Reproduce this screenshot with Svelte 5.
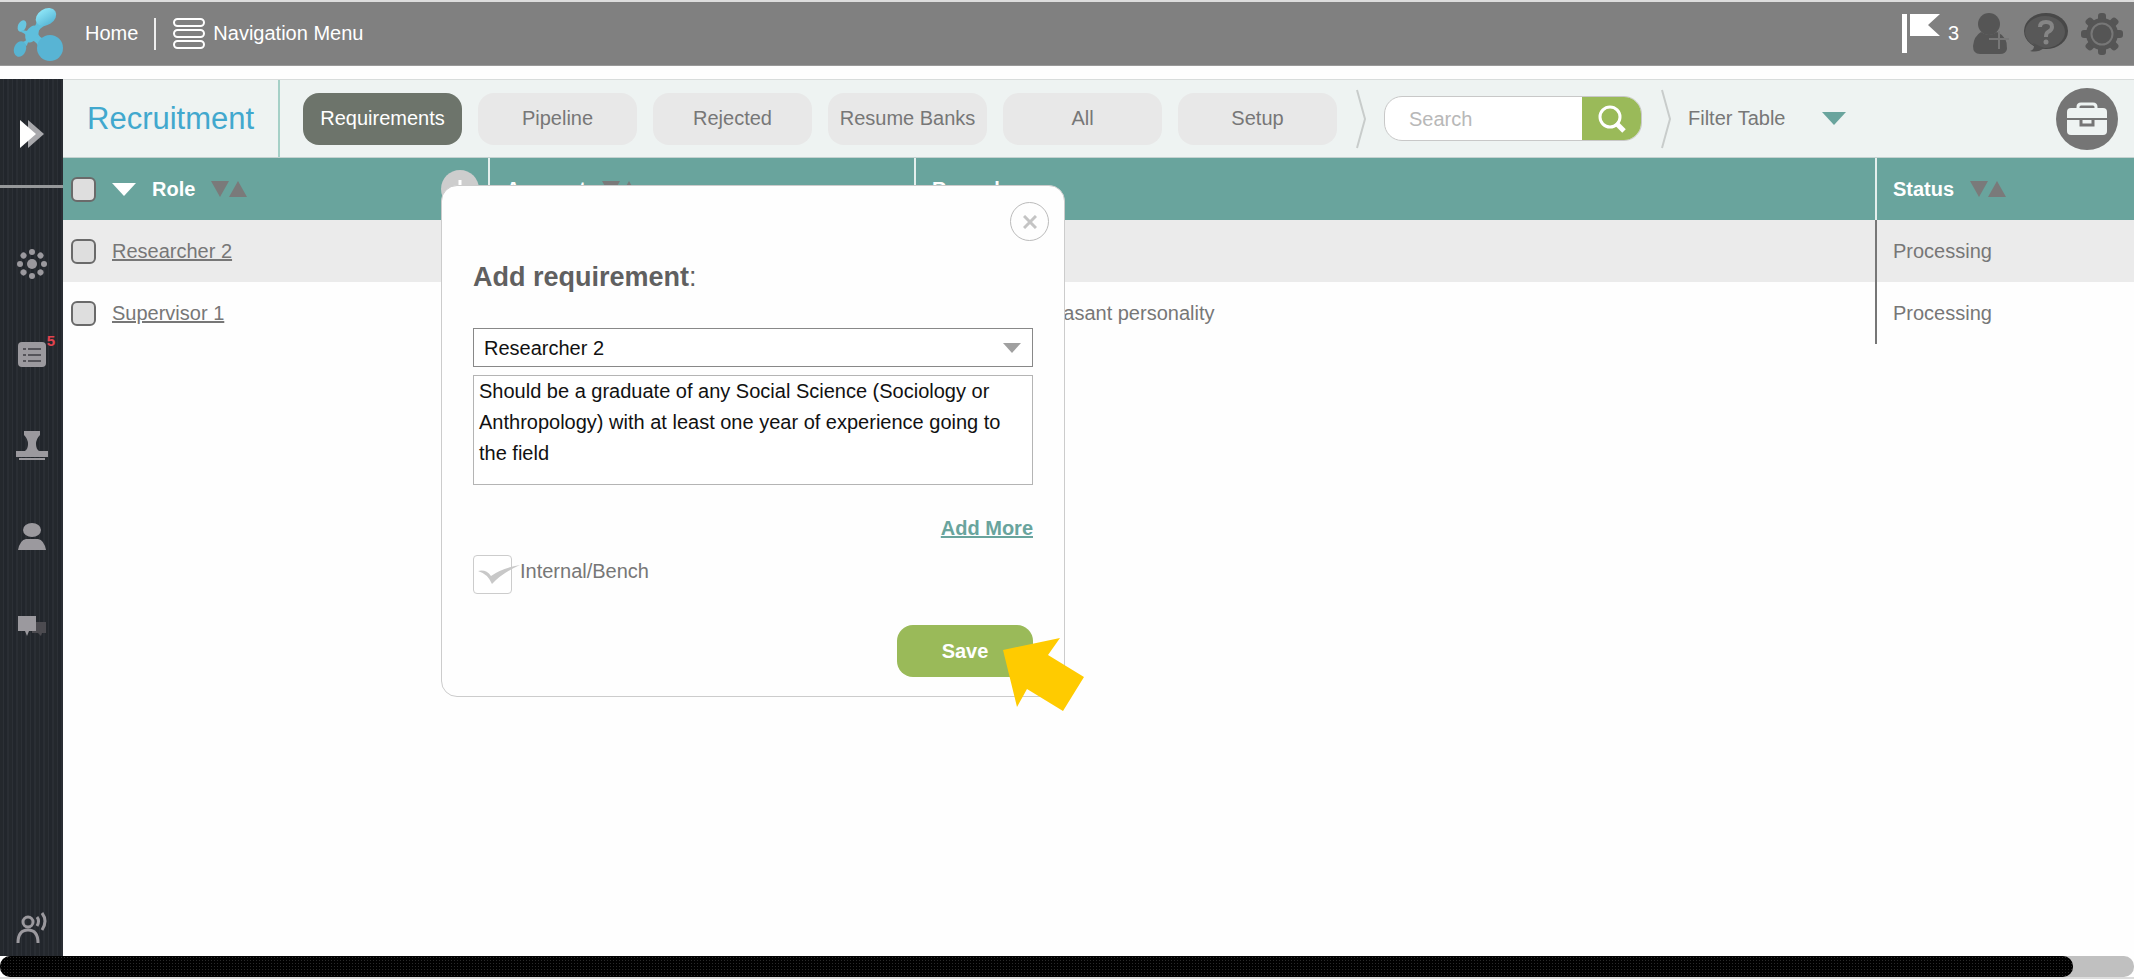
<script>
  const tabs = ['Requirements', 'Pipeline', 'Rejected', 'Resume Banks', 'All', 'Setup'];
  const rows = [
    { role: 'Researcher 2', account: '', remarks: '', status: 'Processing' },
    { role: 'Supervisor 1', account: '', remarks: 'With a very pleasant personality', status: 'Processing' },
  ];
  const dots = [0, 45, 90, 135, 180, 225, 270, 315];

  let active = 'Requirements';
  let search = '';
  let open = true;
  let internal = true;
  let role = 'Researcher 2';
  let text = 'Should be a graduate of any Social Science (Sociology or Anthropology) with at least one year of experience going to the field';
</script>

<div class="page">
  <header class="topbar">
    <a href="#home" class="logo" aria-label="Logo">
      <svg width="54" height="58" viewBox="0 0 54 58">
        <defs>
          <linearGradient id="drop" x1="0" y1="0" x2="0" y2="1">
            <stop offset="0" stop-color="#8ce4f6" />
            <stop offset="1" stop-color="#5ab9d8" />
          </linearGradient>
        </defs>
        <path d="M24 25 Q30 21 30 14 L39 20 Q32 23 31 28 Q32 33 38 34 L32 44 Q31 37 24 35Z" fill="#5fbfdc" />
        <ellipse cx="39" cy="12" rx="11" ry="8" transform="rotate(-32 39 12)" fill="url(#drop)" />
        <ellipse cx="15" cy="21" rx="4" ry="6" transform="rotate(25 15 21)" fill="#68c6e0" />
        <path d="M15 25 Q19 26 22 26 L20 32 Q18 28 14 27Z" fill="#5fbfdc" />
        <ellipse cx="25" cy="29" rx="6" ry="9" transform="rotate(28 25 29)" fill="#5fbfdc" />
        <path d="M24 35 Q20 37 20 41 L15 37 Q20 36 20 33Z" fill="#5fbfdc" />
        <ellipse cx="13" cy="44" rx="6" ry="8" transform="rotate(20 13 44)" fill="#58b4d2" />
        <circle cx="43" cy="43" r="13" fill="#58b4d4" />
      </svg>
    </a>
    <a href="#home">Home</a>
    <span class="bar"></span>
    <a href="#menu" class="menu">
      <svg width="34" height="34" viewBox="0 0 34 34" fill="none" stroke="#fff" stroke-width="2">
        <rect x="2" y="2" width="30" height="7" rx="3.5" />
        <rect x="2" y="13" width="30" height="7" rx="3.5" />
        <rect x="2" y="24" width="30" height="7" rx="3.5" />
      </svg>
      Navigation Menu
    </a>
    <div class="tools">
      <a href="#flags" class="flag">
        <svg width="40" height="40" viewBox="0 0 40 40" fill="#fff">
          <path d="M1 0H6V39H1Z M9 0H39L27 11L39 22H9Z" />
        </svg>
        3
      </a>
      <a href="#users" aria-label="Add user">
        <svg width="38" height="42" viewBox="0 0 38 42">
          <circle cx="16" cy="11" r="11" fill="#555" />
          <path d="M8 19 Q16 25 24 19 Q35 24 34 36 Q33 41 27 41 H7 Q0 41 0 33 Q1 23 8 19Z" fill="#555" />
          <path d="M16 26H36M26 18V36" stroke="#777" stroke-width="2" />
        </svg>
      </a>
      <a href="#help" aria-label="Help">
        <svg width="46" height="42" viewBox="0 0 46 42">
          <ellipse cx="23" cy="18" rx="22" ry="18" fill="#484848" />
          <ellipse cx="22" cy="19" rx="20" ry="16" fill="#585858" />
          <path d="M10 30 Q13 36 7 38 Q15 40 21 35Z" fill="#505050" />
          <path d="M17 14 Q17 9 23 9 Q29 9 29 14 Q29 17 25 19 Q23 20 23 24" fill="none" stroke="#858585" stroke-width="4" />
          <circle cx="23" cy="29" r="2.5" fill="#858585" />
        </svg>
      </a>
      <a href="#settings" aria-label="Settings">
        <svg width="42" height="42" viewBox="0 0 42 42">
          {#each dots as deg}
            <rect x="17" y="0" width="8" height="12" rx="3" fill="#555" transform="rotate({deg} 21 21)" />
          {/each}
          <circle cx="21" cy="21" r="16" fill="#555" />
          <circle cx="21" cy="21" r="10.5" fill="none" stroke="#777" stroke-width="2" />
        </svg>
      </a>
    </div>
  </header>

  <div class="body">
    <nav class="side">
      <a href="#expand" class="expand" aria-label="Expand">
        <svg width="26" height="30" viewBox="0 0 26 30">
          <path d="M9 1L25 15L9 29Z" fill="#a8a8ac" />
          <path d="M1 1L17 15L1 29Z" fill="#fff" />
        </svg>
      </a>
      <a href="#network" aria-label="Network">
        <svg width="32" height="32" viewBox="0 0 32 32" fill="#9b999e">
          <circle cx="16" cy="16" r="5" />
          {#each dots as deg}
            <circle cx="16" cy="4" r="3" transform="rotate({deg} 16 16)" />
          {/each}
        </svg>
      </a>
      <a href="#lists" aria-label="Lists">
        <svg width="28" height="26" viewBox="0 0 28 26">
          <rect width="28" height="25" rx="4" fill="#9b999e" />
          <path d="M5 7H8M10 7H23M5 13H8M10 13H23M5 19H8M10 19H23" stroke="#55545a" stroke-width="2" />
        </svg>
        <span class="count">5</span>
      </a>
      <a href="#approvals" aria-label="Approvals">
        <svg width="32" height="30" viewBox="0 0 32 30" fill="#9b999e">
          <path d="M8 0H24V4Q20 8 20 13Q20 18 23 20H32V26H0V20H9Q12 18 12 13Q12 8 8 4Z" />
          <path d="M3 27H29V29H3Z" />
        </svg>
      </a>
      <a href="#people" aria-label="People">
        <svg width="30" height="28" viewBox="0 0 30 28" fill="#9b999e">
          <ellipse cx="15" cy="7" rx="9" ry="7" />
          <path d="M1 27Q3 17 9 16H21Q27 17 29 27Z" />
        </svg>
      </a>
      <a href="#chat" aria-label="Chat">
        <svg width="28" height="24" viewBox="0 0 28 24">
          <path d="M14 6H28V17H24L23 20L20 17H14Z" fill="#4c4b50" />
          <path d="M0 0H18V15H11L9 20L7 15H0Z" fill="#9b999e" />
        </svg>
      </a>
      <a href="#support" class="last" aria-label="Support">
        <svg width="32" height="32" viewBox="0 0 32 32" fill="none" stroke="#9b999e" stroke-width="3">
          <circle cx="12" cy="10" r="5" />
          <path d="M2 31Q2 18 12 18Q22 18 22 31M21 5Q24 9 21 14M26 1Q32 9 26 18" />
        </svg>
      </a>
    </nav>

    <main>
      <div class="toolbar">
        <h1>Recruitment</h1>
        <div class="tabs">
          {#each tabs as tab}
            <button type="button" class:active={active === tab} on:click={() => (active = tab)}>{tab}</button>
          {/each}
        </div>
        <svg class="chevron" width="11" height="60" viewBox="0 0 11 60"><path d="M1 1L9 30L1 59" /></svg>
        <form class="search" on:submit|preventDefault>
          <input type="text" placeholder="Search" aria-label="Search" bind:value={search} />
          <button type="submit" aria-label="Search">
            <svg width="28" height="28" viewBox="0 0 28 28" fill="none" stroke="#fff">
              <circle cx="12" cy="12" r="10" stroke-width="3" />
              <path d="M18 18L26 26" stroke-width="5" />
            </svg>
          </button>
        </form>
        <svg class="chevron" width="11" height="60" viewBox="0 0 11 60"><path d="M1 1L9 30L1 59" /></svg>
        <button type="button" class="filter">
          Filter Table
          <svg width="24" height="13" viewBox="0 0 24 13"><path d="M0 0H24L12 13Z" fill="#69a49d" /></svg>
        </button>
        <button type="button" class="case" aria-label="Jobs">
          <svg width="40" height="34" viewBox="0 0 40 34">
            <path d="M11 7V5Q11 2 14 2H26Q29 2 29 5V7" fill="none" stroke="#eef3f2" stroke-width="3" />
            <rect y="6" width="40" height="27" rx="4" fill="#eef3f2" />
            <path d="M0 17H40" stroke="#757575" stroke-width="2" />
            <path d="M14 17V23H26V17" fill="none" stroke="#757575" stroke-width="3" />
          </svg>
        </button>
      </div>

      <table>
        <thead>
          <tr>
            <th class="role">
              <div class="cell">
                <input type="checkbox" aria-label="Select all" />
                <svg class="pick" width="24" height="13" viewBox="0 0 24 13"><path d="M0 0H24L12 13Z" fill="#fff" /></svg>
                Role
                <svg class="sort" width="36" height="16" viewBox="0 0 36 16"><path d="M0 0H18L9 16Z M18 16L27 0L36 16Z" /></svg>
                <button type="button" class="plus" aria-label="Add requirement" on:click={() => (open = true)}>
                  <svg width="18" height="18" viewBox="0 0 18 18"><path d="M9 0V18M0 9H18" stroke="#fff" stroke-width="3" /></svg>
                </button>
              </div>
            </th>
            <th class="account">
              <div class="cell">
                Account
                <svg class="sort" width="36" height="16" viewBox="0 0 36 16"><path d="M0 0H18L9 16Z M18 16L27 0L36 16Z" /></svg>
              </div>
            </th>
            <th>Remarks</th>
            <th class="status">
              <div class="cell">
                Status
                <svg class="sort" width="36" height="16" viewBox="0 0 36 16"><path d="M0 0H18L9 16Z M18 16L27 0L36 16Z" /></svg>
              </div>
            </th>
          </tr>
        </thead>
        <tbody>
          {#each rows as row}
            <tr>
              <td>
                <div class="cell">
                  <input type="checkbox" aria-label={row.role} />
                  <a href="#role">{row.role}</a>
                </div>
              </td>
              <td>{row.account}</td>
              <td>{row.remarks}</td>
              <td>{row.status}</td>
            </tr>
          {/each}
        </tbody>
      </table>

      {#if open}
        <form class="modal" on:submit|preventDefault>
          <button type="button" class="close" aria-label="Close" on:click={() => (open = false)}>
            <svg width="14" height="14" viewBox="0 0 14 14"><path d="M1 1L13 13M13 1L1 13" stroke="#c4c4c4" stroke-width="3" /></svg>
          </button>
          <h2>Add requirement<span>:</span></h2>
          <div class="select">
            <select aria-label="Role" bind:value={role}>
              {#each rows as row}
                <option>{row.role}</option>
              {/each}
            </select>
            <svg width="18" height="10" viewBox="0 0 18 10"><path d="M0 0H18L9 10Z" fill="#a0a0a0" /></svg>
          </div>
          <textarea aria-label="Requirement" bind:value={text}></textarea>
          <a href="#more" class="more">Add More</a>
          <label class="internal">
            <input type="checkbox" bind:checked={internal} />
            {#if internal}
              <svg width="42" height="20" viewBox="0 0 42 20"><path d="M0 6Q8 4 13 11Q24 3 42 0Q24 8 14 19Q10 9 0 6Z" fill="#c8c8c8" /></svg>
            {/if}
            <span>Internal/Bench</span>
          </label>
          <button type="submit" class="save">Save</button>
          <svg class="pointer" width="82" height="74" viewBox="0 0 82 74">
            <path d="M0 12L57 0L45 17L81 39L60 73L24 51L14 69Z" fill="#ffcb00" />
          </svg>
        </form>
      {/if}
    </main>
  </div>

  <div class="scroll"><div class="thumb"></div></div>
</div>

<style>
  :global(body) {
    background: #fefefe;
  }

  .page {
    display: flex;
    flex-direction: column;
    box-sizing: border-box;
    min-height: 100vh;
    border-top: 2px solid #ddd;
    border-bottom: 2px solid #ddd;
    font-family: "Liberation Sans", Arial, sans-serif;
    font-size: 20px;
    color: #777;
  }

  button, input, select, textarea {
    box-sizing: border-box;
    margin: 0;
    font: inherit;
    color: inherit;
  }

  button {
    display: flex;
    align-items: center;
    justify-content: center;
    padding: 0;
    border: 0;
    background: none;
    cursor: pointer;
  }

  svg {
    display: block;
    flex: none;
  }

  .topbar {
    display: flex;
    align-items: center;
    box-sizing: border-box;
    height: 64px;
    padding: 0 11px 0 7px;
    background: #808080;
    border-bottom: 1px solid #999;
    color: #fff;
  }

  .topbar a {
    color: #fff;
    text-decoration: none;
  }

  .logo {
    margin-right: 24px;
  }

  .logo svg {
    overflow: visible;
  }

  .bar {
    width: 2px;
    height: 32px;
    margin: 0 16px;
    background: #eee;
  }

  .menu, .flag {
    display: flex;
    align-items: center;
    gap: 7px;
  }

  .tools {
    display: flex;
    align-items: center;
    gap: 12px;
    margin-left: auto;
  }

  .flag {
    margin-right: 2px;
  }

  .body {
    display: flex;
    flex: 1;
    margin-top: 13px;
  }

  .side {
    display: flex;
    flex-direction: column;
    width: 63px;
    background: repeating-linear-gradient(90deg, #24282d 0 3px, #2c3036 3px 4px, #22262c 4px 7px, #2a2e34 7px 9px);
  }

  .side a {
    display: flex;
    align-items: center;
    justify-content: center;
    position: relative;
    height: 91px;
  }

  .side .expand {
    box-sizing: border-box;
    height: 109px;
    margin-bottom: 30px;
    padding-top: 4px;
    border-bottom: 3px solid #96989a;
  }

  .side .last {
    height: 56px;
    margin-top: auto;
  }

  .count {
    position: absolute;
    top: 24px;
    right: 8px;
    font-size: 15px;
    line-height: 16px;
    font-weight: bold;
    color: #e0434f;
  }

  main {
    flex: 1;
    min-width: 0;
    position: relative;
  }

  .toolbar {
    display: flex;
    align-items: center;
    box-sizing: border-box;
    height: 79px;
    padding-right: 16px;
    background: #eef3f2;
    border-top: 1px solid #d8dcdb;
    border-bottom: 1px solid #c4d2d0;
  }

  h1 {
    display: flex;
    align-items: center;
    box-sizing: border-box;
    height: 100%;
    width: 217px;
    margin: 0;
    padding-left: 24px;
    border-right: 2px solid #a5d0c7;
    font-size: 31px;
    font-weight: normal;
    color: #41a8ce;
  }

  .tabs {
    display: flex;
    gap: 16px;
    margin: 0 19px 0 23px;
  }

  .tabs button {
    width: 159px;
    height: 52px;
    border-radius: 16px;
    background: #e8e8e8;
    white-space: nowrap;
  }

  .tabs button.active {
    background: #6d746b;
    color: #fff;
  }

  .chevron path {
    fill: none;
    stroke: #c8cccb;
    stroke-width: 2;
  }

  .search {
    display: flex;
    box-sizing: border-box;
    width: 258px;
    height: 45px;
    margin: 0 19px 0 17px;
    border: 1px solid #c8c8c8;
    border-radius: 18px;
    background: #fff;
    overflow: hidden;
  }

  .search input {
    flex: 1;
    min-width: 0;
    padding: 2px 0 0 24px;
    border: 0;
    background: none;
  }

  .search input::placeholder {
    color: #b8b8b8;
    opacity: 1;
  }

  .search button {
    width: 59px;
    background: #9aba59;
  }

  .filter {
    gap: 37px;
    margin-left: 16px;
  }

  .case {
    width: 62px;
    height: 62px;
    margin-left: auto;
    border-radius: 50%;
    background: #757575;
  }

  table {
    width: 100%;
    border-collapse: collapse;
    table-layout: fixed;
  }

  th, td {
    box-sizing: border-box;
    height: 62px;
    padding: 0 0 0 16px;
    text-align: left;
  }

  th {
    background: #69a49d;
    border-left: 2px solid #e4efed;
    color: #fff;
  }

  th:first-child, td:first-child {
    padding-left: 8px;
    border-left: 0;
  }

  th.role, th.account {
    width: 426px;
  }

  th.status {
    width: 258px;
  }

  td:last-child {
    border-left: 2px solid #777;
  }

  tbody tr:nth-child(odd) {
    background: #ebebeb;
  }

  .cell {
    display: flex;
    align-items: center;
  }

  .cell input {
    appearance: none;
    width: 25px;
    height: 25px;
    margin-right: 16px;
    border: 2px solid #6a6a6a;
    border-radius: 6px;
    background: #dedede;
  }

  .cell a {
    color: #777;
  }

  .pick {
    margin-right: 16px;
  }

  .sort {
    margin-left: 16px;
    fill: #7a7a7a;
  }

  .plus {
    width: 38px;
    height: 38px;
    margin: 0 9px 0 auto;
    border-radius: 50%;
    background: #cdcdcd;
  }

  .modal {
    display: flex;
    flex-direction: column;
    position: absolute;
    top: 106px;
    left: 378px;
    box-sizing: border-box;
    width: 624px;
    padding: 16px 31px 19px;
    border: 1px solid #ccc;
    border-radius: 16px;
    background: #fefefe;
  }

  .close {
    width: 39px;
    height: 39px;
    margin-right: -16px;
    align-self: flex-end;
    border: 1px solid #bbb;
    border-radius: 50%;
  }

  h2 {
    margin: 20px 0 35px;
    font-size: 27px;
    line-height: 32px;
    color: #606060;
  }

  h2 span {
    font-weight: normal;
  }

  .select {
    display: flex;
    align-items: center;
    position: relative;
    color: #111;
  }

  .select select {
    appearance: none;
    width: 100%;
    height: 39px;
    padding: 0 10px;
    border: 1px solid #888;
    border-radius: 0;
    background: #fff;
  }

  .select svg {
    position: absolute;
    right: 12px;
    pointer-events: none;
  }

  textarea {
    display: block;
    height: 110px;
    margin-top: 8px;
    padding: 0 5px;
    border: 1px solid #b4b4b4;
    background: #fff;
    line-height: 31px;
    color: #111;
    resize: none;
    overflow: hidden;
  }

  .more {
    align-self: flex-end;
    margin: 30px 0 14px;
    line-height: 26px;
    font-weight: bold;
    color: #69a49d;
  }

  .internal {
    display: flex;
    gap: 8px;
    position: relative;
    line-height: 32px;
  }

  .internal input {
    appearance: none;
    width: 39px;
    height: 39px;
    border: 1px solid #ccc;
    border-radius: 4px;
    background: #fff;
  }

  .internal svg {
    position: absolute;
    left: 5px;
    top: 10px;
  }

  .save {
    align-self: flex-end;
    width: 136px;
    height: 52px;
    margin-top: 31px;
    border-radius: 16px;
    background: #9aba59;
    color: #fff;
    font-weight: bold;
  }

  .pointer {
    position: absolute;
    right: -21px;
    bottom: -16px;
    pointer-events: none;
  }

  .scroll {
    height: 21px;
    border-radius: 10px;
    background: #c0c0c0;
  }

  .thumb {
    height: 100%;
    margin-right: 61px;
    border-radius: 10px;
    background: radial-gradient(circle, #2a2a2a 0 1px, #000 1px) 0 0 / 3px 3px;
  }
</style>
